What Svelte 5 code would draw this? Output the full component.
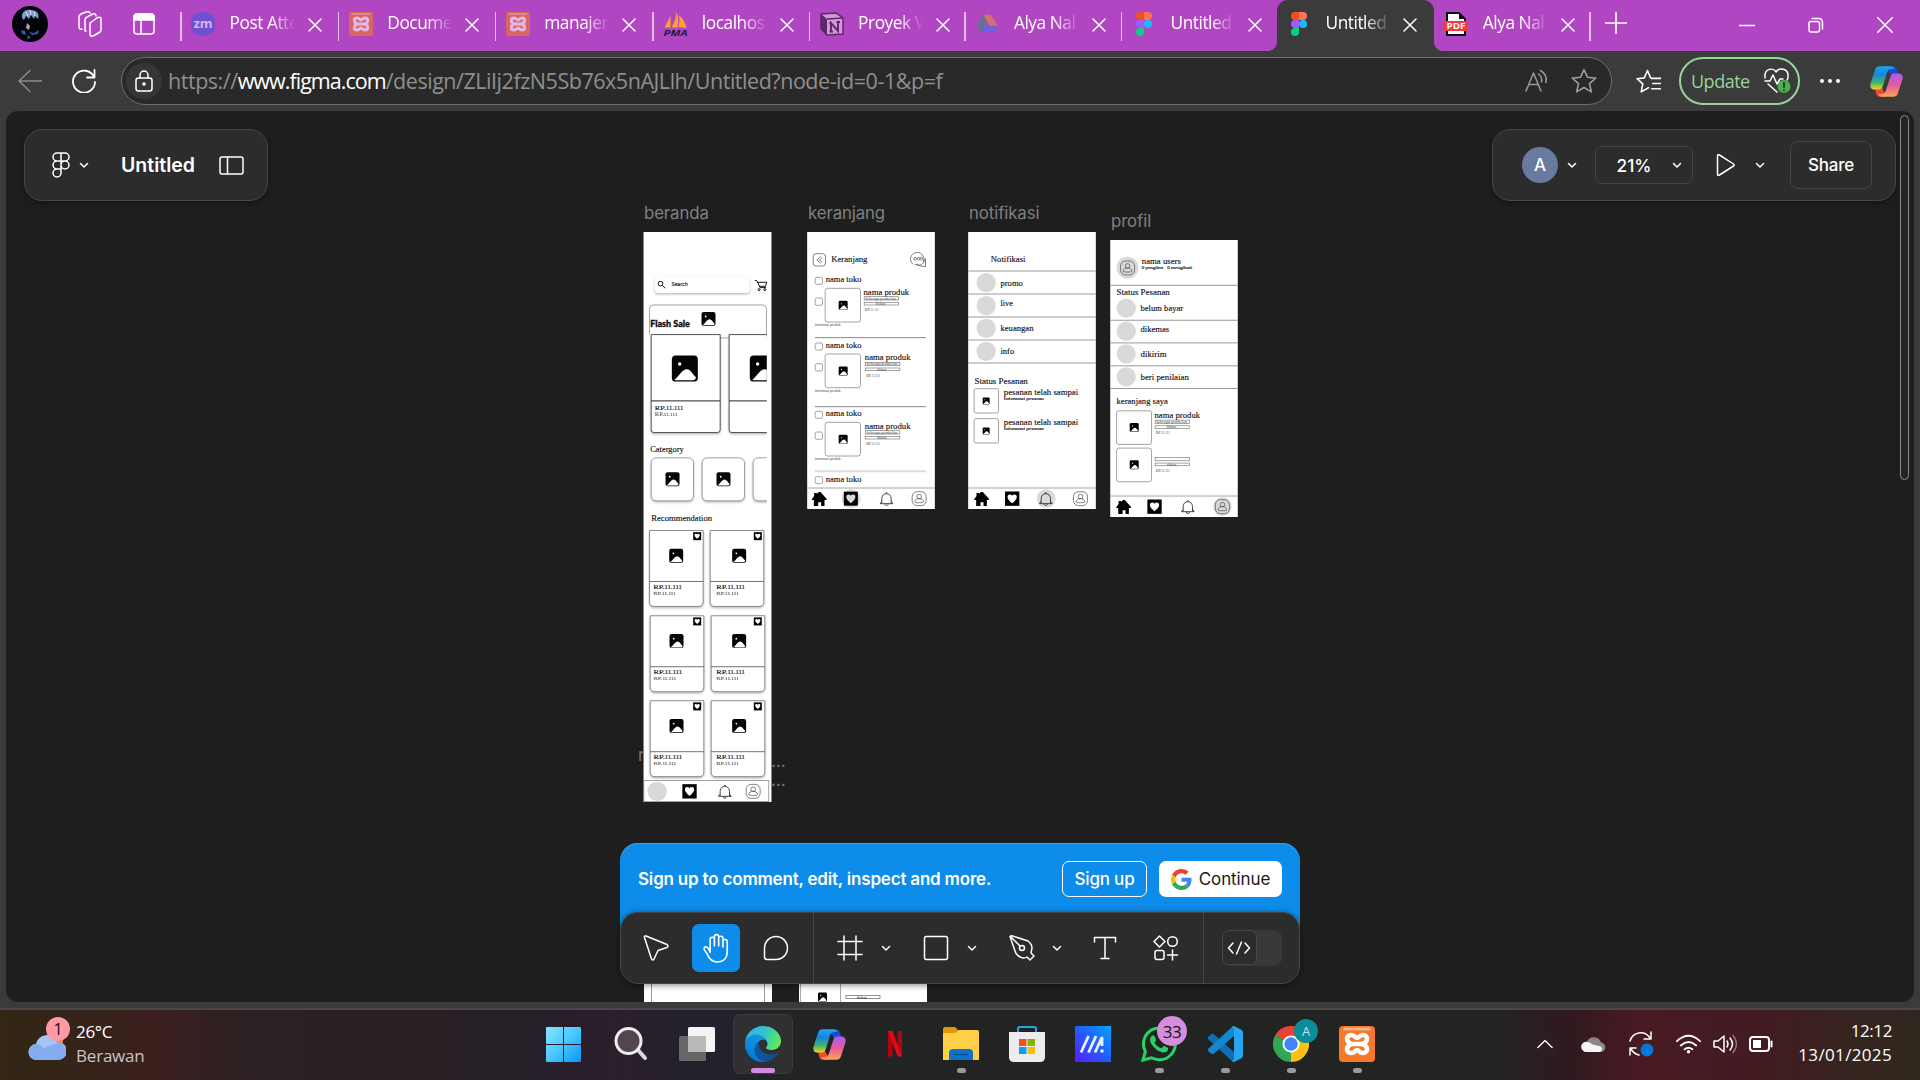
<script>
  const tabs = [
    { title: 'Post Atte', icon: 'zm' },
    { title: 'Docume', icon: 'xampp' },
    { title: 'manajen', icon: 'xampp' },
    { title: 'localhos', icon: 'pma' },
    { title: 'Proyek V', icon: 'notion' },
    { title: 'Alya Nal', icon: 'drive' },
    { title: 'Untitled', icon: 'figma' },
    { title: 'Untitled', icon: 'figma', active: true },
    { title: 'Alya Nal', icon: 'pdf' }
  ];
  const flash = [
    [64, 418, 207, 294],
    [298, 418, 207, 294]
  ];
  const cards = [
    [59, 1006, 139], [241, 1006, 328], [61, 1262, 140], [244, 1262, 328], [61, 1517, 140], [244, 1517, 328]
  ];
  const cart = [
    { y: 255, dx: 0 },
    { y: 452, dx: 4 },
    { y: 657, dx: 4 }
  ];
  const notif = [
    ['promo', 262, 271, 67], ['live', 331, 333, 37], ['keuangan', 399, 408, 99], ['info', 468, 476, 41]
  ];
  const orders = [
    ['belum bayar', 309, 318, 128], ['dikemas', 378, 379, 86], ['dikirim', 446, 456, 78], ['beri penilaian', 515, 524, 145]
  ];
  const apps = ['start', 'search', 'taskview', 'edge', 'copilot', 'netflix', 'folder', 'store', 'ma', 'whatsapp', 'vscode', 'chrome', 'xampp'];
  const running = ['folder', 'whatsapp', 'vscode', 'chrome', 'xampp'];
</script>

{#snippet chev()}
  <svg class="chev" viewBox="0 0 12 12" width="12" height="12"><path d="M2.500 4.500l3.500 3.500 3.500-3.500" /></svg>
{/snippet}

{#snippet figmaLogo()}
  <svg viewBox="0 0 16 24" width="16" height="24">
    <path d="M4 0h4v8H4a4 4 0 010-8z" fill="#f24e1e" /><path d="M8 0h4a4 4 0 010 8H8z" fill="#ff7262" />
    <path d="M4 8h4v8H4a4 4 0 010-8z" fill="#a259ff" /><circle cx="12" cy="12" r="4" fill="#1abcfe" />
    <path d="M4 16h4v4a4 4 0 11-4-4z" fill="#0acf83" />
  </svg>
{/snippet}

{#snippet xamppLogo(s)}
  <svg viewBox="0 0 36 36" width={s} height={s}>
    <rect width="36" height="36" rx="4" fill="#f5792a" /><rect x="4" y="1.500" width="28" height="3" rx="1.500" fill="#f9b083" />
    <path d="M13 18c-7-2-6-9-1-9 4 0 4 3 6 3s2-3 6-3c5 0 6 7-1 9 7 2 6 9 1 9-4 0-4-3-6-3s-2 3-6 3c-5 0-6-7 1-9zM14 18h8" fill="none" stroke="#fff" stroke-width="4.500" stroke-linejoin="round" />
  </svg>
{/snippet}

{#snippet copilotLogo(s)}
  <svg viewBox="0 0 48 48" width={s} height={s}>
    <defs>
      <linearGradient id="cool" x1="0" y1="0" x2="0" y2="1"><stop offset="0" stop-color="#1aa7ee" /><stop offset=".35" stop-color="#1685dd" /><stop offset=".7" stop-color="#3fb56b" /><stop offset="1" stop-color="#f5d21c" /></linearGradient>
      <linearGradient id="warm" x1="0" y1="0" x2="0" y2="1"><stop offset="0" stop-color="#a95df0" /><stop offset=".5" stop-color="#e75a9b" /><stop offset="1" stop-color="#ffa54c" /></linearGradient>
    </defs>
    <path d="M24 3h9c4 0 5 3 6 8l2 5H30z" fill="#2049d0" />
    <path d="M24 45h-9c-4 0-5-3-6-8l-2-4h11z" fill="#ee4b32" />
    <path d="M35 7c-1-3-3-4-6-4H15c-4 0-6 2-7 6L2 27c-1 5 1 8 6 8h5c3 0 5-2 6-5l5-16c1-4 3-7 7-7z" fill="url(#cool)" />
    <path d="M13 41c1 3 3 4 6 4h14c4 0 6-2 7-6l6-18c1-5-1-8-6-8h-5c-3 0-5 2-6 5l-5 16c-1 4-3 7-7 7z" fill="url(#warm)" />
  </svg>
{/snippet}

{#snippet pic(cx, cy, s)}
  <g transform="translate({cx - s / 2} {cy - s / 2}) scale({s / 20})">
    <rect width="20" height="20" rx="3" fill="#050505" />
    <circle cx="6" cy="6.500" r="1.300" fill="#fff" />
    <path d="M2 18.500c3-2 6-8 9.500-8 3 0 4.500 4 7 6 0 2-1 2.500-2.500 2.500H4c-1 0-2 0-2-.5z" fill="#fff" />
  </g>
{/snippet}

{#snippet t(x, y, w, size, s)}
  <text {x} {y} font-size={size} textLength={w} lengthAdjust="spacingAndGlyphs">{s}</text>
{/snippet}

{#snippet price(x, y, w, size)}
  <text {x} {y} font-size={size} textLength={w} lengthAdjust="spacingAndGlyphs">RP.<tspan font-size={size * 0.8}>11.111</tspan></text>
{/snippet}

{#snippet heart(cx, cy, s, fill)}
  <g transform="translate({cx - s / 2} {cy - s / 2}) scale({s / 20})">
    <rect width="20" height="20" fill="#000" />
    <path d="M10 16.500C6 13 3.500 10.500 3.500 7.500c0-4 5-4.500 6.500-1.500 1.500-3 6.500-2.500 6.500 1.500 0 3-2.500 5.500-6.500 9z" {fill} />
  </g>
{/snippet}

{#snippet house(cx, cy)}
  <path transform="translate({cx} {cy})" d="M-22 2L-15-8v-9h8v3l5-6h6L22 0v4h-6v18H6V11h-9v11h-13V4h-6z" fill="#000" />
{/snippet}

{#snippet bell(cx, cy)}
  <g transform="translate({cx} {cy})" class="line"><path d="M-14 13V-1C-14-11-7-16 0-16S14-11 14-1v14M-19 14h38l-4-6M-19 14l4-6M-5 15c1 6 9 6 10 0M-2-17c0-3 4-3 4 0" stroke="#222" stroke-width="2.500" /></g>
{/snippet}

{#snippet person(cx, cy)}
  <g transform="translate({cx} {cy})" class="line dark"><rect x="-21" y="-21" width="42" height="42" rx="15" /><circle cy="-6" r="7" /><path d="M-13 10c0-14 26-14 26 0 0 3-26 3-26 0z" /></g>
{/snippet}

{#snippet product(x, y, label)}
  {#if label}{@render t(x, y, 137, 26, 'nama produk')}{/if}
  <g class="line"><rect x={x + 2} y={y + 6} width="103" height="10" /><rect x={x + 2} y={y + 23} width="103" height="8" /></g>
  <g class="tiny">
    {#if label}{@render t(x + 6, y + 15, 92, 11, 'beberapa pembelian')}{/if}
    {@render t(x + 37, y + 31, 28, 10, 'diskon')}
    {@render price(x + 4, y + 49, 42, 11)}
  </g>
{/snippet}

<div class="screen">
  <header class="tabstrip">
    <div class="lead">
      <svg class="face" viewBox="0 0 36 36" width="36" height="36"><circle cx="18" cy="18" r="18" fill="#030409" /><path d="M10 12c-1-7 5-9 9-8 6 0 9 4 7 9l-3-3-1 3-3-4-2 4-3-3-2 4z" fill="#7f98d0" /><path d="M14 6l2 4M18 4l1 5M22 6l1 4" stroke="#dfe7fb" stroke-width="1" /><path d="M15 17l3 3-1 4-3-2z" fill="#c79bb4" /><path d="M9 24l4 1 1 4-4-1zM17 26l5 1 5-3-1 4-6 1zM16 29l3 3-4 1z" fill="#3655a4" /></svg>
      <svg viewBox="0 0 26 26" width="26" height="26" class="w"><path d="M13 12l7-5q4-2 4 1v11q0 1-1 2l-6 3.500q-4 2-4-2zM9 20H8V9q0-2 2-3l6-3q3-1 3 2M5 18q-3 1-3-2V6q0-2 2-3l5-2q3-1 4 1" /></svg>
      <svg viewBox="0 0 24 24" width="24" height="24" class="w"><rect x="2" y="2" width="20" height="20" rx="3" /><path d="M9 8v14" /><path d="M2 8V5q0-3 3-3h14q3 0 3 3v3z" fill="#fff" /></svg>
    </div>
    <div class="tabs">
      {#each tabs as tab, i}
        <div class="tab" class:active={tab.active} class:nosep={i === 8}>
          <span class="fav" class:dim={tab.icon === 'xampp' || tab.icon === 'drive' || tab.icon === 'notion'}>
            {#if tab.icon === 'zm'}<span class="zm">zm</span>
            {:else if tab.icon === 'xampp'}{@render xamppLogo(24)}
            {:else if tab.icon === 'pma'}
              <svg viewBox="0 0 24 24" width="25" height="24"><path d="M1 15.500L7 4v11.500zM8 15.500q4-6 5-15.500 3 7 1 15.500zM15 15q2-8 0-12 6 4 8 13z" fill="#ffa02a" /><text x="0" y="24" font-size="9.500" font-style="italic" font-weight="700" textLength="24" lengthAdjust="spacingAndGlyphs" fill="#1f1d3d">PMA</text></svg>
            {:else if tab.icon === 'notion'}
              <svg viewBox="0 0 24 24" width="24" height="24"><path d="M1 2l15-1 7 5v16l-16 1-6-6z" fill="#ecc8f0" stroke="#2b1630" stroke-width="1.500" /><path d="M1 2l6 5v16l-6-6z" fill="#2b1630" /><path d="M7 7l16-1" stroke="#2b1630" stroke-width="1.500" /><path d="M11 19v-8l7 8v-9M9.500 11h2M16.500 10h3.500M9.500 19.500h3.500" fill="none" stroke="#2b1630" stroke-width="1.900" /></svg>
            {:else if tab.icon === 'drive'}
              <svg viewBox="0 0 24 24" width="22" height="22"><path d="M8 2h4v7l-7 12-4-7z" fill="#3c8c6c" /><path d="M8 2h8l8 12-3 2h-5z" fill="#e88a40" /><path d="M5 21l4-7h15l-4 7z" fill="#4273e8" /></svg>
            {:else if tab.icon === 'figma'}{@render figmaLogo()}
            {:else}
              <svg viewBox="0 0 24 24" width="24" height="24"><path d="M3 1h12l6 6v16H3z" fill="#fff" stroke="#111" stroke-width="2" /><path d="M15 1v6h6z" fill="#111" /><rect x="0" y="9" width="24" height="10" rx="1" fill="#f23b3b" /><text x="2.500" y="17" font-size="8.500" font-weight="700" textLength="19" lengthAdjust="spacingAndGlyphs" fill="#fff">PDF</text></svg>
            {/if}
          </span>
          <span class="title">{tab.title}</span>
          <svg class="w x" viewBox="0 0 14 14" width="14" height="14"><path d="M1 1l12 12M13 1L1 13" /></svg>
        </div>
      {/each}
    </div>
    <svg class="w plus" viewBox="0 0 20 20" width="22" height="22"><path d="M10 0v20M0 10h20" /></svg>
    <div class="winbtns">
      <svg class="w" viewBox="0 0 16 16" width="16" height="16"><path d="M0 8.500h16" /></svg>
      <svg class="w" viewBox="0 0 16 16" width="16" height="16"><rect x="1" y="4.500" width="10.500" height="10.500" rx="2" /><path d="M4 1.500h6.500Q14.500 1.500 14.500 6v6" /></svg>
      <svg class="w" viewBox="0 0 16 16" width="16" height="16"><path d="M.5.5l15 15M15.500.5l-15 15" /></svg>
    </div>
  </header>

  <div class="address">
    <svg class="w back" viewBox="0 0 24 24" width="24" height="24"><path d="M24 12H1M12 1.500L1 12l11 10.500" /></svg>
    <svg class="w reload" viewBox="0 0 24 24" width="24" height="24"><path d="M22 8A11 11 0 1023 13M22.500 1v7.500H15" /></svg>
    <div class="url">
      <span class="lock"><svg class="w" viewBox="0 0 18 22" width="18" height="22"><rect x="1" y="8" width="16" height="13" rx="2.500" /><path d="M5 8V5a4 4 0 018 0v3" /><circle cx="9" cy="14" r="1" fill="#fff" /></svg></span>
      <span class="urltext">https://<b>www.figma.com</b>/design/ZLiIj2fzN5Sb76x5nAJLlh/Untitled?node-id=0-1&amp;p=f</span>
      <svg class="w g" viewBox="0 0 24 24" width="24" height="24"><path d="M1 22L8.500 4 16 22M4 15.500h9M13.500 5q4 3 3 8M15.500 1.500q7 4 5.500 12" /></svg>
      <svg class="w g star" viewBox="0 0 24 24" width="26" height="26"><path d="M12 1.500l3.200 7 7.600.8-5.700 5.100 1.700 7.600-6.800-4-6.800 4 1.700-7.600L1.200 9.300l7.600-.8z" /></svg>
    </div>
    <svg class="w favs" viewBox="0 0 24 24" width="25" height="25"><path d="M15 9l-1-.5L11 1.500 8 8.500 1 9.300l5.500 5L5 22l7-4M15 9h9M16 14h8M15 19h9" /></svg>
    <div class="update"><span>Update</span>
      <svg class="w" viewBox="0 0 28 26" width="28" height="26"><path d="M2 10C1-1 11 0 13 4c3-5 13-4 12 5 0 2-1 3-1 3M2 13h5l3-6 4 9 3-5h3M5 16l9 8" /><circle cx="21" cy="18.500" r="6.500" fill="#4caf50" stroke="none" /><path d="M21 14.500v5M21 22v.5" stroke="#16301a" stroke-width="1.600" /></svg>
    </div>
    <svg class="dots" viewBox="0 0 20 4" width="20" height="4"><circle cx="2" cy="2" r="2" /><circle cx="10" cy="2" r="2" /><circle cx="18" cy="2" r="2" /></svg>
    {@render copilotLogo(35)}
  </div>

  <main class="canvas">
    <div class="board b1">
      <span>beranda</span>
      <svg viewBox="39.5 110 387 1711" width="129" height="570">
        <rect x="41" y="110" width="384" height="1711" fill="#fff" />
        <rect x="74" y="244" width="286" height="49" rx="12" fill="#fff" class="shadow" />
        <g class="line bold"><circle cx="92" cy="265" r="7" /><path d="M97 270l9 9M375 256h6l10 21h18M383 261h28l-4 12h-19" stroke-width="3" /><circle cx="388" cy="283" r="3" /><circle cx="405" cy="283" r="3" /></g>
        <g class="sans">{@render t(125, 273, 49, 16, 'Search')}</g>
        <g class="line"><path d="M59 418v-77q0-12 12-12h327q12 0 12 12v87H271" /></g>
        {@render pic(236, 371, 42)}
        <g class="fat">{@render t(61, 395, 119, 27, 'Flash Sale')}</g>
        <svg x="41" y="400" width="370" height="540" viewBox="41 400 370 540">
          {#each flash as [x, y, w, h]}
            <path d="M{x} {y}h{w}v{h - 8}q0 8-8 8h-{w - 16}q-8 0-8-8z" fill="#fff" class="shadow" stroke="#333" stroke-width="2.500" />
            <path d="M{x} 617h{w}" stroke="#222" stroke-width="3" />
            {@render pic(x + 101, 520, 78)}
          {/each}
          {#each [64, 217, 370] as x}<rect {x} y="788" width="127" height="129" rx="15" fill="#fff" stroke="#777" stroke-width="2" class="shadow" />{/each}
          {@render pic(128, 852, 42)}{@render pic(281, 852, 42)}
        </svg>
        {@render price(75, 645, 85, 20)}
        <g opacity=".65">{@render price(75, 663, 68, 16)}</g>
        {@render t(61, 769, 101, 25, 'Catergory')}
        {@render t(64, 977, 183, 25, 'Recommendation')}
        {#each cards as [x, y, px]}
          <path d="M{x} {y}h161v214q0 14-14 14h-133q-14 0-14-14z" fill="#fff" stroke="#777" stroke-width="2.500" class="shadow" />
          <path d="M{x} {y + 153}h161" stroke="#555" stroke-width="2.500" />
          {@render heart(x < 100 ? 202 : 384, y + 17, 24, '#fff')}
          {@render pic(px, y + 76, 42)}
          {@render price(px - 69, y + 176, 86, 19)}
          <g opacity=".65">{@render price(px - 69, y + 194, 68, 15)}</g>
        {/each}
        <g class="line"><rect x="42" y="1756" width="375" height="64" /></g>
        <circle cx="82" cy="1789" r="29" fill="#d9d9d9" />
        {@render heart(179, 1789, 43, '#fff')}{@render bell(285, 1790)}{@render person(370, 1789)}
      </svg>
    </div>

    <div class="board b2">
      <span>keranjang</span>
      <svg viewBox="37 110 383 831" width="128" height="277">
        <rect x="37" y="110" width="383" height="831" fill="#fff" />
        <g class="line dark"><rect x="55" y="175" width="37" height="37" rx="9" /><path d="M78 183l-12 11 12 10M82 187l-8 7 8 6" /><path d="M355 207A20 20 0 11385 200M360 207q25 10 30-15M365 207q15 8 27 7v-25" /><circle cx="361" cy="190" r="4" /><circle cx="371" cy="190" r="4" /><circle cx="380" cy="190" r="4" /></g>
        {@render t(109, 201, 109, 26, 'Keranjang')}
        {#each cart as c, i}
          <g class="line"><rect x="61" y={c.y - 9} width="22" height="21" rx="5" /><rect x="61" y={c.y + 53} width="22" height="22" rx="5" /><rect x="91" y={c.y + 24} width="106" height="101" rx="7" /></g>
          {@render t(93, c.y + 6, 107, 25, 'nama toko')}
          {@render pic(145, c.y + 75, 27)}
          {@render product(206 + c.dx, c.y + 43, true)}
          <g class="tiny">{@render t(60, c.y + 138, 77, 11, 'informasi produk')}</g>
          <path d="M60 {[427, 634, 828][i]}h333" stroke={i === 2 ? '#ddd' : '#888'} stroke-width={i === 2 ? 6 : 3} />
        {/each}
        <g class="line"><rect x="61" y="844" width="22" height="21" rx="5" /><path d="M37 878h383" /></g>
        {@render t(93, 860, 107, 25, 'nama toko')}
        <circle cx="169" cy="910" r="28" fill="#d9d9d9" />
        {@render house(73, 910)}{@render heart(168, 910, 42, '#d9d9d9')}{@render bell(275, 911)}{@render person(373, 910)}
      </svg>
    </div>

    <div class="board b3">
      <span>notifikasi</span>
      <svg viewBox="40 110 383 831" width="128" height="277">
        <rect x="40" y="110" width="383" height="831" fill="#fff" />
        {@render t(108, 200, 104, 25, 'Notifikasi')}
        {#each [227, 296, 365, 434, 503] as y}<path d="M40 {y}h383" stroke="#999" stroke-width="3" />{/each}
        {#each notif as [label, cy, y, w]}
          <circle cx="94" {cy} r="29" fill="#d9d9d9" />{@render t(137, y, w, 25, label)}
        {/each}
        {@render t(59, 565, 160, 25, 'Status Pesanan')}
        {#each [580, 670] as y}
          <g class="line"><rect x="58" {y} width="73" height="73" rx="5" /></g>{@render pic(94, y + 37, 21)}
          {@render t(147, y + 20, 223, 25, 'pesanan telah sampai')}{@render t(147, y + 33, 120, 14, 'Informasi pesanan')}
        {/each}
        <g class="line"><path d="M40 878h383" /></g>
        <circle cx="274" cy="910" r="28" fill="#d9d9d9" />
        {@render house(80, 910)}{@render heart(172, 910, 43, '#fff')}{@render bell(273, 911)}{@render person(377, 910)}
      </svg>
    </div>

    <div class="board b4">
      <span>profil</span>
      <svg viewBox="31 103 383 832" width="128" height="277">
        <rect x="31" y="103" width="383" height="832" fill="#fff" />
        <circle cx="83" cy="186" r="33" fill="#d9d9d9" />{@render person(83, 187)}
        {@render t(126, 176, 117, 25, 'nama users')}{@render t(126, 190, 64, 14, '0 pengikut')}{@render t(202, 189, 75, 14, '0 mengikuti')}
        {#each [239, 344, 412, 481, 549] as y}<path d="M31 {y}h383" stroke="#999" stroke-width="3" />{/each}
        {@render t(50, 269, 160, 25, 'Status Pesanan')}
        {#each orders as [label, cy, y, w]}
          <circle cx="79" cy={cy - 1} r="29" fill="#d9d9d9" />{@render t(122, y - 1, w, 25, label)}
        {/each}
        {@render t(50, 597, 154, 25, 'keranjang saya')}
        {#each [616, 728] as y}<g class="line"><rect x="50" {y} width="105" height="101" rx="7" /></g>{@render pic(103, y + 50, 27)}{/each}
        {@render product(164, 638, true)}{@render product(164, 750, false)}
        <g class="line"><path d="M31 872h383" /></g>
        <circle cx="368" cy="904" r="28" fill="#d9d9d9" />
        {@render house(71, 904)}{@render heart(164, 904, 43, '#fff')}{@render bell(264, 905)}{@render person(368, 904)}
      </svg>
    </div>

    <div class="stub s1"></div>
    <div class="stub s2">
      <svg viewBox="0 0 128 50" width="128" height="50"><rect width="128" height="50" fill="#fff" /><path d="M1.500 0v50M41.500 0v50" stroke="#aaa" fill="none" />{@render pic(23.500, 36, 9)}<g class="line"><rect x="47" y="34.500" width="34" height="3" stroke-width=".8" /></g>{@render t(58, 37.500, 10, 4, 'diskon')}{@render t(47, 45, 14, 4, 'RP.11.111')}</svg>
    </div>
    <span class="stray n">r</span><span class="stray d1">…</span><span class="stray d2">…</span>

    <div class="panels">
      <div class="panel left">
        <svg class="w" viewBox="0 0 18 26" width="18" height="26"><path d="M9 1H5a4 4 0 000 8h4zM9 1h4a4 4 0 010 8H9M9 9H5a4 4 0 000 8h4zM13 9a4 4 0 110 8 4 4 0 010-8zM9 17H5a4 4 0 104 4zM9 9h4" /></svg>
        {@render chev()}
        <strong>Untitled</strong>
        <svg class="w" viewBox="0 0 25 19" width="25" height="19"><rect x="1" y="1" width="23" height="17" rx="2" /><path d="M8.500 1v17" /></svg>
      </div>
      <div class="panel right">
        <span class="avatar">A</span>{@render chev()}
        <div class="zoom"><span>21%</span>{@render chev()}</div>
        <svg class="w play" viewBox="0 0 20 24" width="20" height="24"><path d="M1.500 3v18q0 2 2 1l14-9q1.500-1 0-2l-14-9q-2-1-2 1z" /></svg>{@render chev()}
        <div class="share">Share</div>
      </div>
    </div>
    <div class="scrollbar"></div>

    <div class="dock">
      <div class="promo">
        <p>Sign up to comment, edit, inspect and more.</p>
        <div class="signup">Sign up</div>
        <div class="continue">
          <svg viewBox="0 0 48 48" width="21" height="21"><path fill="#ea4335" d="M24 9.500c3.540 0 6.710 1.220 9.210 3.600l6.850-6.850C35.900 2.380 30.470 0 24 0 14.620 0 6.510 5.380 2.560 13.220l7.980 6.190C12.430 13.720 17.740 9.500 24 9.500z" /><path fill="#4285f4" d="M46.980 24.550c0-1.570-.15-3.090-.38-4.550H24v9.020h12.940c-.58 2.960-2.260 5.480-4.780 7.180l7.730 6c4.510-4.180 7.090-10.360 7.090-17.650z" /><path fill="#fbbc05" d="M10.530 28.590c-.48-1.450-.76-2.990-.76-4.590s.27-3.140.76-4.590l-7.980-6.190C.92 16.460 0 20.120 0 24c0 3.880.92 7.540 2.560 10.780l7.970-6.190z" /><path fill="#34a853" d="M24 48c6.480 0 11.930-2.130 15.890-5.810l-7.730-6c-2.150 1.450-4.920 2.300-8.160 2.300-6.260 0-11.570-4.220-13.470-9.910l-7.980 6.190C6.510 42.620 14.620 48 24 48z" /></svg>
          <span>Continue</span>
        </div>
      </div>
      <div class="tools">
        <div class="grp g1">
          <svg class="w" viewBox="0 0 28 28" width="28" height="28"><path d="M2.500 3.500q-.5-2 1.500-1.500l21 8.500q2 1.500 0 3l-9 3-4 8.500q-1.500 2-2.500 0z" /></svg>
          <div class="hand"><svg class="w" viewBox="0 0 28 28" width="30" height="30"><path d="M8.500 15V6a2 2 0 014 0v6V3.500a2 2 0 014 0V12 5a2 2 0 014 0v8-5a2 2 0 014 0v9c0 7-4 10-9 10-6 0-8-3-9.500-7L3 15.500q-.5-3 2-2.500 2 .5 3.500 5z" /></svg></div>
          <svg class="w" viewBox="0 0 26 26" width="26" height="26"><path d="M1.500 13A11.500 11.500 0 1113 24.500H4q-2.500 0-2.500-2.500z" /></svg>
        </div>
        <div class="grp g2">
          <svg class="w" viewBox="0 0 26 26" width="26" height="26"><path d="M7 1v24M19 1v24M1 6.500h24M1 19.500h24" /></svg>{@render chev()}
          <svg class="w" viewBox="0 0 26 26" width="26" height="26"><rect x="1.500" y="1.500" width="23" height="23" rx="2" /></svg>{@render chev()}
          <svg class="w" viewBox="0 0 28 28" width="28" height="28"><path d="M2 2.500q1-1 2.500-.5L20 7q4 3 4 7l-1 5 3 3-4 4-3-3q-3 2-7 0-4-2-5-6zM3 3l9 9" /><circle cx="14" cy="14" r="2.500" /></svg>{@render chev()}
          <svg class="w" viewBox="0 0 24 24" width="24" height="24"><path d="M1.500 6V1.500h21V6M12 1.500v21M8 22.500h8" /></svg>
          <svg class="w" viewBox="0 0 26 26" width="26" height="26"><path d="M6.500 1L12 6.500 6.500 12 1 6.500zM19.500 15v10M14.500 20h10" /><circle cx="19.500" cy="6.500" r="4.800" /><rect x="2" y="15.500" width="9" height="9" rx="2" /></svg>
        </div>
        <div class="grp g3"><div class="toggle"><span><svg class="w" viewBox="0 0 24 16" width="24" height="16"><path d="M6 3L1.500 8 6 13M18 3l4.500 5-4.500 5M14.500 2l-5 12" /></svg></span></div></div>
      </div>
    </div>
  </main>

  <footer class="taskbar">
    <div class="weather">
      <div class="wicon">
        <svg viewBox="0 0 38 34" width="38" height="34"><circle cx="26" cy="15" r="9" fill="#f98416" /><path d="M9 33a8 8 0 01-1-16 11 11 0 0121-2 9 9 0 010 18z" fill="#a5c5f8" /><path d="M9 33a8 8 0 01-1-16q6 0 8 5 5-4 9-4l6-3a9 9 0 01-2 18z" fill="#86acf0" /></svg>
        <span class="badge pink">1</span>
      </div>
      <div class="wtext"><span>26°C</span><span class="muted">Berawan</span></div>
    </div>
    <div class="apps">
      {#each apps as app}
        <div class="app" class:first={app === 'start'} class:current={app === 'edge'} class:running={running.includes(app)}>
          {#if app === 'start'}
            <svg viewBox="0 0 35 35" width="35" height="35"><defs><linearGradient id="win" x1="0" y1="0" x2="1" y2="1"><stop offset="0" stop-color="#8be4ff" /><stop offset=".5" stop-color="#48c8ff" /><stop offset="1" stop-color="#0a94fa" /></linearGradient></defs><path d="M0 1q0-1 1-1h16v17H0zM18 0h16q1 0 1 1v16H18zM0 18h17v17H1q-1 0-1-1zM18 18h17v16q0 1-1 1H18z" fill="url(#win)" /></svg>
          {:else if app === 'search'}
            <svg viewBox="0 0 34 36" width="34" height="36"><path d="M24 24l7 8" stroke="#d5d9dd" stroke-width="4" stroke-linecap="round" /><circle cx="14.500" cy="15" r="12.500" fill="#51464f" stroke="#eceef0" stroke-width="3" /></svg>
          {:else if app === 'taskview'}
            <svg viewBox="0 0 36 34" width="36" height="34"><rect x="9" y="0" width="27" height="25" rx="1.500" fill="#f4f4f4" /><rect x="0" y="9" width="27" height="25" rx="1.500" fill="#666" /><path d="M9 9h18v16H9z" fill="#b9b9b9" /></svg>
          {:else if app === 'edge'}
            <svg viewBox="0 0 256 256" width="36" height="36"><defs><linearGradient id="e1" x1="0" x2="1"><stop offset="0" stop-color="#0c59a4" /><stop offset="1" stop-color="#114a8b" /></linearGradient><linearGradient id="e2" x1=".8" y1="0" x2=".3" y2="1"><stop offset="0" stop-color="#1b9de2" /><stop offset="1" stop-color="#0078d4" /></linearGradient><linearGradient id="e3" x1="0" y1=".3" x2="1" y2=".6"><stop offset="0" stop-color="#2fb4ee" /><stop offset=".5" stop-color="#33c3c8" /><stop offset="1" stop-color="#66eb4f" /></linearGradient></defs>
              <path fill="url(#e1)" d="M231.100 190.500c-3.400 1.800-6.900 3.400-10.500 4.700-11.500 4.300-23.600 6.500-35.900 6.500-47.300 0-88.500-32.500-88.500-74.300.1-11.400 6.400-21.900 16.400-27.300-42.800 1.800-53.800 46.400-53.800 72.500 0 73.900 68.100 81.400 82.800 81.400 7.900 0 19.800-2.300 27-4.600l1.300-.4c27.600-9.500 51-28.100 66.600-52.800 1.200-1.900.6-4.300-1.200-5.500-1.300-.8-2.900-.9-4.200-.2z" /><path fill="url(#e2)" d="M105.700 241.400c-8.900-5.500-16.600-12.800-22.700-21.300-26.300-36-18.400-86.500 17.600-112.800 3.800-2.700 7.700-5.200 11.900-7.200 3.100-1.500 8.400-4.100 15.500-4 10.100.1 19.600 4.900 25.700 13 4 5.400 6.300 11.900 6.400 18.700 0-.2 24.500-79.600-80-79.600-43.900 0-80 41.700-80 78.200-.2 19.300 4 38.500 12.100 56 27.600 58.800 94.800 87.600 156.400 67.100-21.100 6.600-44.100 3.700-62.900-8.100z" /><path fill="url(#e3)" d="M152.300 148.900c-.8 1-3.300 2.500-3.300 5.700 0 2.600 1.700 5.100 4.700 7.200 14.400 10 41.500 8.700 41.600 8.700 10.700 0 21.100-2.900 30.300-8.300 18.800-11 30.400-31.100 30.400-52.900.3-22.400-8-37.300-11.300-43.900C223.500 23.900 177.700 0 128 0 58 0 1 56.200 0 126.200c.5-36.500 36.800-66 80-66 3.500 0 23.500.3 42 10.100 16.300 8.600 24.900 18.900 30.800 29.200 6.200 10.700 7.300 24.100 7.300 29.500s-2.700 13.300-7.800 19.900z" /></svg>
          {:else if app === 'copilot'}{@render copilotLogo(35)}
          {:else if app === 'netflix'}
            <svg viewBox="0 0 14 26" width="14" height="26"><path d="M0 0h4.500v25L0 26zM9.500 0H14v26l-4.500-1z" fill="#b1060f" /><path d="M0 0h4.500L14 26l-4.500-1z" fill="#e50914" /></svg>
          {:else if app === 'folder'}
            <svg viewBox="0 0 36 34" width="36" height="34"><path d="M0 2q0-2 2-2h10l4 4v6H0z" fill="#dc9a08" /><path d="M0 6h12l4-3h18q2 0 2 2v27q0 1-1 1H0z" fill="#ffcf48" /><path d="M6 33V26q0-4 4-4h16q4 0 4 4v7z" fill="#0e72c7" /><path d="M11 27.500h14" stroke="#084e8f" stroke-width="1.500" /></svg>
          {:else if app === 'store'}
            <svg viewBox="0 0 36 36" width="36" height="36"><path d="M9 7V3q0-2 2-2h14q2 0 2 2v4" fill="none" stroke="#27a5e5" stroke-width="2" /><path d="M0 6h36v25q0 5-5 5H5q-5 0-5-5z" fill="#ededed" /><path d="M10 13h7.500v7H10z" fill="#f25022" /><path d="M18.500 13H26v7h-7.500z" fill="#7fba00" /><path d="M10 21h7.500v7H10z" fill="#00a4ef" /><path d="M18.500 21H26v7h-7.500z" fill="#ffb900" /></svg>
          {:else if app === 'ma'}
            <svg viewBox="0 0 36 36" width="36" height="36"><defs><linearGradient id="ma" x1="0" y1="1" x2="1" y2="0"><stop offset="0" stop-color="#5a1cff" /><stop offset=".5" stop-color="#245cff" /><stop offset="1" stop-color="#00a6ff" /></linearGradient></defs><path d="M0 0h36v36H0z" fill="url(#ma)" /><path d="M6 26.500L13.500 10M13.500 26.500L21 10M20 26.500L27 11v9" fill="none" stroke="#e9f2ff" stroke-width="2.800" /><circle cx="27" cy="25" r="1.800" fill="#e9f2ff" /></svg>
          {:else if app === 'whatsapp'}
            <svg viewBox="0 0 24 24" width="36" height="36"><path d="M1.300 22.700l1.600-5.800A10.600 10.600 0 1112 22.500a10.600 10.600 0 01-5-1.300z" fill="none" stroke="#25d366" stroke-width="2" /><path fill="#25d366" d="M17.472 14.382c-.297-.149-1.758-.867-2.030-.967-.273-.099-.471-.148-.67.15-.197.297-.767.966-.94 1.164-.173.199-.347.223-.644.075-.297-.15-1.255-.463-2.390-1.475-.883-.788-1.480-1.761-1.653-2.059-.173-.297-.018-.458.130-.606.134-.133.298-.347.446-.520.149-.174.198-.298.298-.497.099-.198.050-.371-.025-.520-.075-.149-.669-1.612-.916-2.207-.242-.579-.487-.500-.669-.510-.173-.008-.371-.010-.570-.010-.198 0-.520.074-.792.372-.272.297-1.040 1.016-1.040 2.479 0 1.462 1.065 2.875 1.213 3.074.149.198 2.096 3.200 5.077 4.487.709.306 1.262.489 1.694.625.712.227 1.360.195 1.871.118.571-.085 1.758-.719 2.006-1.413.248-.694.248-1.289.173-1.413-.074-.124-.272-.198-.570-.347z" /></svg>
            <span class="badge lilac">33</span>
          {:else if app === 'vscode'}
            <svg viewBox="0 0 36 36" width="36" height="36"><path d="M2 10l3-2q1-.5 2 .5l20 17.500V36q-1 0-2-1L1 13q-1-1 1-3z" fill="#0b70b8" /><path d="M2 26l3 2q1 .5 2-.5L27 10V0q-1 0-2 1L1 23q-1 1 1 3z" fill="#1587cf" /><path d="M27 0l7 3.500q2 1 2 3v23q0 2-2 3L27 36q-1.500 0-2-1.500 2 0 2-2v-29q0-2-2-2Q25.500 0 27 0z" fill="#2ba4ef" /></svg>
          {:else if app === 'chrome'}
            <svg viewBox="0 0 36 36" width="36" height="36"><path d="M18 18L2.400 9A18 18 0 0133.600 9z" fill="#ea4335" /><path d="M18 18L33.600 9A18 18 0 0118 36z" fill="#fbc116" /><path d="M18 18v18A18 18 0 012.400 9z" fill="#30a853" /><path d="M18 10h15.600L18 36l7-14z" fill="#fbc116" /><circle cx="18" cy="18" r="8.500" fill="#fff" /><circle cx="18" cy="18" r="6.700" fill="#4285f4" /></svg>
            <span class="badge teal">A</span>
          {:else}{@render xamppLogo(36)}{/if}
        </div>
      {/each}
    </div>
    <div class="tray">
      <svg class="w" viewBox="0 0 18 10" width="16" height="10"><path d="M1 9l8-8 8 8" /></svg>
      <svg viewBox="0 0 26 18" width="25" height="17"><path d="M6 17a5.500 5.500 0 010-11 8 8 0 0115 1 5 5 0 01-1 10z" fill="#8d8587" /><path d="M6 17a5.500 5.500 0 01-1-11q4 0 7 3l9 2a4 4 0 01-1 6z" fill="#f5f5f5" /></svg>
      <svg class="w" viewBox="0 0 26 26" width="26" height="26"><path d="M2 10A11 11 0 0122 7M23 1v7h-7M11 24Q6 23 3 18M2 24v-7h6" /><circle cx="19" cy="19" r="6.500" fill="#0078d7" stroke="none" /></svg>
      <svg class="w" viewBox="0 0 26 20" width="25" height="20"><path d="M1 7Q13-4 25 7M5 11.500q8-7 16 0M9 15.500q4-3 8 0" stroke-width="2" /><circle cx="13" cy="18" r="1.800" fill="#fff" stroke="none" /></svg>
      <svg class="w" viewBox="0 0 24 20" width="24" height="20"><path d="M1 7v6h4l6 5V2L5 7zM14 7q2 3 0 6M17 4q5 6 0 12" /><path d="M20 1.500q7 8.500 0 17" stroke="#8a7577" /></svg>
      <svg class="w" viewBox="0 0 24 16" width="24" height="16"><rect x="1" y="1" width="19" height="14" rx="3" stroke-width="2" /><rect x="4" y="4" width="8" height="8" fill="#fff" stroke="none" /><path d="M22.500 5.500v5" stroke-width="2" /></svg>
      <div class="clock"><span>12:12</span><span class="date">13/01/2025</span></div>
    </div>
  </footer>
</div>

<style>
  :global(body) { overflow: hidden; background: #3b3b3b; }
  .screen { width: 1920px; height: 1080px; display: flex; flex-direction: column; font-family: "Open Sans", "Noto Sans", sans-serif; color: #fff; background: #3b3b3b; overflow: hidden; }
  svg { display: block; flex: none; }
  .w { fill: none; stroke: #fff; stroke-width: 1.5; stroke-linecap: round; stroke-linejoin: round; }
  .chev { fill: none; stroke: #fff; stroke-width: 1.5; stroke-linecap: round; stroke-linejoin: round; }

  .tabstrip { height: 51px; flex: none; display: flex; background: #b146c2; }
  .lead { width: 181px; box-sizing: border-box; padding: 0 0 3px 12px; display: flex; align-items: center; gap: 29px; }
  .tabs { display: grid; grid-template-columns: 157.8px 157px 157.5px 156.3px 155.9px 156.5px 155px 157.3px 155.7px; }
  .tab { position: relative; box-sizing: border-box; display: flex; align-items: center; padding: 0 0 3px 9px; }
  .tab::before { content: ""; position: absolute; left: -1px; top: 12px; width: 1.500px; height: 29px; background: #e3bde9; }
  .tab.active::before, .tab.nosep::before { display: none; }
  .tab.nosep::after { content: ""; position: absolute; right: -1px; top: 12px; width: 1.500px; height: 29px; background: #e3bde9; }
  .tab.active { background: #3b3b3b; border-radius: 11px 11px 0 0; }
  .tab.active::after { content: ""; position: absolute; left: -10px; right: -10px; bottom: 0; height: 10px; background: radial-gradient(circle at 0 0, transparent 10px, #3b3b3b 10.5px) left / 10px 10px no-repeat, radial-gradient(circle at 100% 0, transparent 10px, #3b3b3b 10.5px) right / 10px 10px no-repeat; }
  .fav { width: 26px; height: 24px; display: flex; justify-content: center; align-items: center; margin-right: 13.5px; }
  .fav.dim { opacity: .62; }
  .zm { width: 24px; height: 24px; border-radius: 10px; background: #704fd0; color: #d7b5f0; font-size: 13px; font-weight: 700; line-height: 22px; text-align: center; }
  .title { width: 67px; white-space: nowrap; font-size: 17.3px; line-height: 24px; letter-spacing: -.45px; margin-top: -2px; mask-image: linear-gradient(90deg, #000 60%, transparent 98%); }
  .x { margin: 2px 0 0 11px; }
  .plus { margin: 12px 0 0 15px; }
  .winbtns { flex: 1; display: flex; justify-content: flex-end; gap: 53px; padding: 17px 27px 0 0; }

  .address { height: 60px; flex: none; display: flex; align-items: center; padding: 0 15px 0 18px; }
  .back { stroke: #8c8c8c; margin-right: 30px; }
  .reload { stroke-width: 1.8; margin-right: 25px; }
  .url { width: 1491px; flex: none; height: 48px; box-sizing: border-box; border: 1.500px solid #6e6e6e; border-radius: 24px; background: #292929; display: flex; align-items: center; padding: 0 14px 0 4px; }
  .lock { width: 36px; height: 36px; border-radius: 50%; background: #363636; display: flex; align-items: center; justify-content: center; }
  .urltext { flex: 1; margin: -2px 0 0 6px; font-size: 21.5px; letter-spacing: -.46px; color: #8f8f8f; white-space: nowrap; }
  .urltext b { color: #fff; font-weight: 400; letter-spacing: -.97px; }
  .g { stroke: #9a9a9a; }
  .star { margin-left: 22px; }
  .favs { margin: 0 18px 0 24px; }
  .update { width: 121px; flex: none; height: 48px; box-sizing: border-box; border: 2px solid #97d49a; border-radius: 24px; display: flex; align-items: center; padding-left: 10px; gap: 12px; color: #97d49a; font-size: 18px; letter-spacing: -.5px; }
  .update span { width: 60px; }
  .dots { fill: #fff; margin: 0 29px 0 20px; }

  .canvas { position: relative; height: 891px; flex: none; margin: 0 6px; width: 1908px; background: #1e1e1e; border-radius: 12px; overflow: hidden; font-family: Inter, sans-serif; }
  .board { position: absolute; display: flex; flex-direction: column; }
  .board > span { height: 31px; line-height: 25px; padding-left: 1px; font-size: 16.8px; letter-spacing: -.1px; color: #808080; white-space: nowrap; }
  .b1 { left: 637px; top: 90px; }
  .b2 { left: 801px; top: 90px; }
  .b3 { left: 962px; top: 90px; }
  .b4 { left: 1104px; top: 98px; }
  .board text, .stub text { font-family: "Liberation Serif", serif; fill: #111; }
  .board text { stroke: #111; stroke-width: .4; }
  .board .tiny text { fill: #444; stroke: none; }
  .board .sans text { font-family: Inter, sans-serif; }
  .board .fat text { font-family: Lato, sans-serif; font-weight: 900; stroke-width: 1; }
  .line { fill: none; stroke: #777; stroke-width: 2; }
  .dark { stroke: #444; }
  .bold { stroke: #111; stroke-width: 3; }
  .shadow { filter: drop-shadow(0 4px 3px rgba(0, 0, 0, .28)); }
  .stub { position: absolute; top: 850px; width: 128px; height: 50px; background: #fff; }
  .s1 { left: 637.5px; box-sizing: border-box; border: solid #fff; border-width: 0 7px; box-shadow: inset 1px 0 #999, inset -1px 0 #999; }
  .s2 { left: 793.3px; }
  .stray { position: absolute; color: #777; font-size: 17px; line-height: 20px; }
  .n { left: 632px; top: 634px; }
  .d1 { left: 765px; top: 640px; }
  .d2 { left: 765px; top: 659px; }

  .panels { position: relative; display: flex; justify-content: space-between; padding: 18px 18px 0; }
  .panel { height: 72px; box-sizing: border-box; border: 1px solid #464646; border-radius: 18px; background: #2c2c2c; display: flex; align-items: center; box-shadow: 0 2px 6px rgba(0, 0, 0, .35); }
  .left { width: 244px; padding-left: 27px; }
  .left .chev { margin: 0 31px 0 8px; }
  .left strong { width: 76px; font-size: 19.5px; font-weight: 600; letter-spacing: 0; margin-right: 22px; white-space: nowrap; }
  .right { width: 404px; padding-left: 29px; }
  .avatar { width: 36px; height: 36px; border-radius: 50%; background: #697a9f; display: grid; place-items: center; font-size: 17px; font-weight: 500; margin-right: 8px; }
  .zoom { width: 98px; height: 38px; box-sizing: border-box; border: 1px solid #444; border-radius: 7px; margin: 0 23px 0 17px; display: flex; align-items: center; justify-content: space-between; padding: 0 9px 0 20.5px; font-size: 17.3px; font-weight: 500; }
  .play { margin-right: 18px; }
  .share { width: 82px; height: 48px; box-sizing: border-box; border: 1px solid #444; border-radius: 8px; margin-left: 24px; display: grid; place-items: center; font-size: 17px; font-weight: 500; letter-spacing: -.2px; }
  .scrollbar { position: absolute; left: 1894px; top: 4px; width: 9px; height: 365px; box-sizing: border-box; border: 1.500px solid #8c8c8c; border-radius: 5px; background: #242424; }

  .dock { position: absolute; left: 614px; top: 732px; width: 680px; height: 141px; }
  .promo { height: 100px; border-radius: 18px 18px 0 0; background: #0d8ce9; box-shadow: inset 0 1px #3ba2ee; box-sizing: border-box; padding: 18px 18px 0; display: flex; align-items: flex-start; }
  .promo p { flex: 1; margin: 0; line-height: 36px; font-size: 17px; font-weight: 600; letter-spacing: -.19px; white-space: nowrap; }
  .signup { width: 85px; height: 36px; box-sizing: border-box; border: 1.500px solid #fff; border-radius: 7px; display: grid; place-items: center; font-size: 17px; font-weight: 500; letter-spacing: -.2px; }
  .continue { width: 123px; height: 36px; margin-left: 12px; border-radius: 7px; background: #fff; color: #1a1a1a; display: flex; align-items: center; justify-content: center; gap: 7px; font-size: 17px; letter-spacing: -.1px; }
  .tools { position: relative; margin-top: -31px; height: 72px; box-sizing: border-box; border: 1px solid #454545; border-radius: 18px; background: #2c2c2c; display: flex; box-shadow: 0 1px 6px rgba(0, 0, 0, .5); }
  .grp { display: flex; align-items: center; box-sizing: border-box; }
  .g1 { width: 193px; padding-left: 21px; border-right: 1.500px solid #464646; gap: 21.500px; }
  .g1 > svg:last-child { margin-left: 2px; }
  .g2 { width: 389.5px; padding-left: 23px; border-right: 1.500px solid #464646; }
  .g2 .chev { margin: 0 30.5px 0 17px; }
  .g2 .chev:nth-child(6) { margin: 0 29.5px 0 15px; }
  .g2 svg:nth-child(8) { margin-left: 36px; }
  .g3 { padding-left: 18px; }
  .hand { width: 48px; height: 48px; border-radius: 7px; background: #0d8ce9; display: grid; place-items: center; }
  .toggle { width: 60px; height: 36px; border-radius: 8px; background: #383838; }
  .toggle span { width: 33px; height: 33px; border: 1px solid #464646; border-radius: 7px; background: #2c2c2c; display: grid; place-items: center; }

  .taskbar { height: 72px; flex: none; margin-top: auto; border-top: 2px solid #4a4746; box-sizing: border-box; display: grid; grid-template-columns: 535px 852px 1fr; background: linear-gradient(90deg, #332614, #35231a 90px, #3c1f1e 160px, #2c2022 240px, #282023 420px, #251f29 530px, #2c1e2b 610px, #21222c 710px, #222324 800px, #232323 1500px, #30191f 1570px, #491a23 1640px, #421b21 1760px, #35251f 1860px, #2f271e); }
  .weather { display: flex; padding: 9px 0 0 28px; gap: 10px; }
  .wicon { position: relative; padding-top: 8px; height: 50px; width: 38px; }
  .badge { position: absolute; border-radius: 50%; display: grid; place-items: center; color: #111; font-size: 16px; }
  .pink { left: 18px; top: -2px; width: 24px; height: 24px; background: #ff99a4; }
  .wtext { display: flex; flex-direction: column; line-height: 24px; padding-top: 1px; font-size: 17px; letter-spacing: -.3px; }
  .muted { color: #c8c4c3; letter-spacing: -.2px; }
  .apps { display: grid; grid-template-columns: repeat(13, 60px); column-gap: 6px; align-items: start; align-content: start; padding-top: 4px; }
  .app { position: relative; width: 60px; height: 60px; box-sizing: border-box; border-radius: 7px; display: grid; place-items: center; }
  .first { padding-right: 3px; }
  .current { background: #303032; border: 1px solid #3b3b3d; }
  .current::after, .running::after { content: ""; position: absolute; left: 26px; top: 54px; width: 9px; height: 5px; border-radius: 3px; background: #9b9b9b; }
  .current::after { left: 17px; top: 53px; width: 24px; background: #d78be0; }
  .lilac { left: 28px; top: 2px; width: 30px; height: 30px; background: #d68ddc; font-size: 17px; letter-spacing: -.5px; }
  .teal { left: 33px; top: 5px; width: 24px; height: 24px; background: #0c8b9a; color: #cde; font-size: 13px; }
  .tray { display: flex; align-items: center; padding: 2px 28px 0 150px; height: 66px; box-sizing: border-box; }
  .tray > svg:nth-child(2) { margin-left: 28px; }
  .tray > svg:nth-child(3) { margin-left: 22px; }
  .tray > svg:nth-child(4) { margin-left: 22px; }
  .tray > svg:nth-child(5) { margin-left: 12px; }
  .tray > svg:nth-child(6) { margin-left: 12px; }
  .clock { flex: 1; display: flex; flex-direction: column; align-items: flex-end; line-height: 24px; font-size: 17px; letter-spacing: -.4px; margin-top: -2px; }
  .date { letter-spacing: .35px; }
</style>
